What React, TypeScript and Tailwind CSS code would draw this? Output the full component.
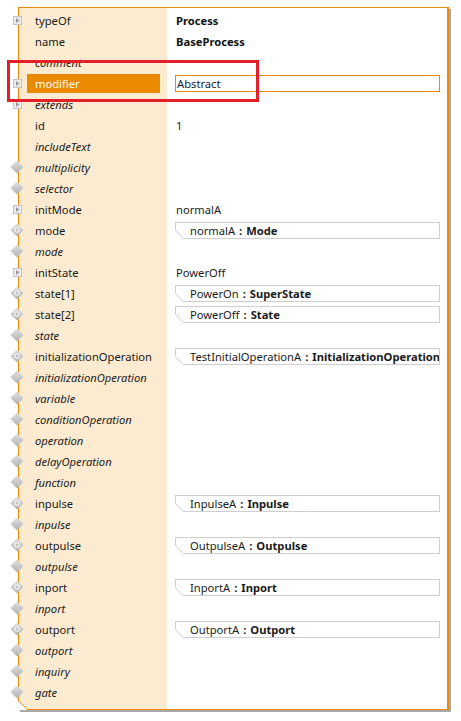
import React from "react";

type Value =
  | { kind: "text"; text: string }
  | { kind: "bold"; text: string }
  | { kind: "input"; text: string }
  | { kind: "ref"; name: string; type: string };

type Row = {
  label: string;
  italic?: boolean;
  icon?: "expand" | "diamond" | "plus";
  selected?: boolean;
  value?: Value;
};

const rows: Row[] = [
  { label: "typeOf", icon: "expand", value: { kind: "bold", text: "Process" } },
  { label: "name", value: { kind: "bold", text: "BaseProcess" } },
  { label: "comment", italic: true },
  { label: "modifier", icon: "expand", selected: true, value: { kind: "input", text: "Abstract" } },
  { label: "extends", italic: true, icon: "expand" },
  { label: "id", value: { kind: "text", text: "1" } },
  { label: "includeText", italic: true },
  { label: "multiplicity", italic: true, icon: "diamond" },
  { label: "selector", italic: true, icon: "diamond" },
  { label: "initMode", icon: "expand", value: { kind: "text", text: "normalA" } },
  { label: "mode", icon: "plus", value: { kind: "ref", name: "normalA", type: "Mode" } },
  { label: "mode", italic: true, icon: "diamond" },
  { label: "initState", icon: "expand", value: { kind: "text", text: "PowerOff" } },
  { label: "state[1]", icon: "plus", value: { kind: "ref", name: "PowerOn", type: "SuperState" } },
  { label: "state[2]", icon: "plus", value: { kind: "ref", name: "PowerOff", type: "State" } },
  { label: "state", italic: true, icon: "diamond" },
  {
    label: "initializationOperation",
    icon: "plus",
    value: { kind: "ref", name: "TestInitialOperationA", type: "InitializationOperation" },
  },
  { label: "initializationOperation", italic: true, icon: "diamond" },
  { label: "variable", italic: true, icon: "diamond" },
  { label: "conditionOperation", italic: true, icon: "diamond" },
  { label: "operation", italic: true, icon: "diamond" },
  { label: "delayOperation", italic: true, icon: "diamond" },
  { label: "function", italic: true, icon: "diamond" },
  { label: "inpulse", icon: "plus", value: { kind: "ref", name: "InpulseA", type: "Inpulse" } },
  { label: "inpulse", italic: true, icon: "diamond" },
  { label: "outpulse", icon: "plus", value: { kind: "ref", name: "OutpulseA", type: "Outpulse" } },
  { label: "outpulse", italic: true, icon: "diamond" },
  { label: "inport", icon: "plus", value: { kind: "ref", name: "InportA", type: "Inport" } },
  { label: "inport", italic: true, icon: "diamond" },
  { label: "outport", icon: "plus", value: { kind: "ref", name: "OutportA", type: "Outport" } },
  { label: "outport", italic: true, icon: "diamond" },
  { label: "inquiry", italic: true, icon: "diamond" },
  { label: "gate", italic: true, icon: "diamond" },
];

// 왼쪽 테두리 위에 걸치는 작은 아이콘
function RowIcon({ kind }: { kind: Row["icon"] }) {
  if (kind === "expand") {
    return (
      <svg width="9" height="9" className="absolute left-[-5px] top-[6px]">
        <rect x="0.5" y="0.5" width="8" height="8" fill="#ececec" stroke="#c4c4c4" />
        <path d="M3 2 L6.5 4.5 L3 7 Z" fill="#9a9a9a" />
      </svg>
    );
  }
  if (!kind) return null;
  return (
    <svg width="14" height="14" className="absolute left-[-8px] top-[3px]">
      <defs>
        <linearGradient id="dg" x1="0" y1="0" x2="0" y2="1">
          <stop offset="0" stopColor="#e0e0e0" />
          <stop offset="1" stopColor="#b2b2b2" />
        </linearGradient>
      </defs>
      <path d="M7 0.5 L13.5 7 L7 13.5 L0.5 7 Z" fill="url(#dg)" />
      {kind === "plus" && (
        <>
          <circle cx="7" cy="7" r="2.8" fill="#f6f6f6" />
          <path d="M7 5.2 V8.8 M5.2 7 H8.8" stroke="#b4b4b4" strokeWidth="1" />
        </>
      )}
    </svg>
  );
}

function RefBox({ name, type }: { name: string; type: string }) {
  return (
    <div className="flex h-[17px] w-full">
      <svg width="8" height="17" className="shrink-0">
        <path d="M0.5 0.5 H8 M0.5 0 V8.5 L8 16.5" stroke="#cfcfcf" fill="none" />
      </svg>
      <div className="flex-1 min-w-0 flex items-center border-t border-r border-b border-[#cfcfcf] pl-[7px] overflow-hidden whitespace-nowrap text-[#1a1a1a]">
        <span>{name}</span>
        <span className="font-bold ml-[4px] mr-[4px]">:</span>
        <span className="font-bold">{type}</span>
      </div>
    </div>
  );
}

function ValueCell({ value }: { value?: Value }) {
  if (!value) return null;
  if (value.kind === "bold") return <span className="font-bold pl-[1px] text-[#111]">{value.text}</span>;
  if (value.kind === "text") return <span className="pl-[1px] text-[#1a1a1a]">{value.text}</span>;
  if (value.kind === "input")
    return (
      <div className="h-[17px] w-full border border-[#e8890c] flex items-center text-[#1a1a40]">
        <span className="pl-[1px]">{value.text}</span>
      </div>
    );
  return <RefBox name={value.name} type={value.type} />;
}

export default function App() {
  return (
    <div className="relative w-[461px] h-[721px] bg-white pt-[7px] pl-[18px] font-['Noto_Sans',sans-serif] text-[11.2px] leading-none">
      <div className="relative w-[431px] border-t border-r-2 border-b border-[#e8890c] bg-[linear-gradient(to_right,#fcebd0_149px,#ffffff_149px)] pt-[2px] pb-[6px] shadow-[2px_2px_0_#a8a8a8]">
        {/* 왼쪽 테두리 (모서리 잘림 때문에 따로) */}
        <div className="absolute left-0 top-0 bottom-[7px] w-px bg-[#e8890c]" />
        <svg width="10" height="9" className="absolute left-0 bottom-[-1px]">
          <path d="M0 0 L9 8 V9 H0 Z" fill="#ffffff" />
          <path d="M0.5 0 L9.5 8.5" stroke="#e8890c" fill="none" />
        </svg>

        {rows.map((row, i) => (
          <div key={i} className="flex h-[21px]">
            <div className="relative w-[149px] shrink-0 pl-[9px] pr-[7px] flex items-center">
              <RowIcon kind={row.icon} />
              <div
                className={
                  "flex-1 h-[19px] flex items-center pl-[8px] whitespace-nowrap " +
                  (row.selected ? "bg-[#ea8a00] text-white " : "text-[#1a1a1a] ") +
                  (row.italic ? "italic text-[#222]" : "")
                }
              >
                {row.label}
              </div>
            </div>
            <div className="flex-1 min-w-0 flex items-center pl-[8px] pr-[7px]">
              <ValueCell value={row.value} />
            </div>
          </div>
        ))}
      </div>

      {/* 강조 표시 빨간 박스 */}
      <div className="absolute left-[7px] top-[60px] w-[252px] h-[42px] border-[3px] border-[#e3202a]" />
    </div>
  );
}
